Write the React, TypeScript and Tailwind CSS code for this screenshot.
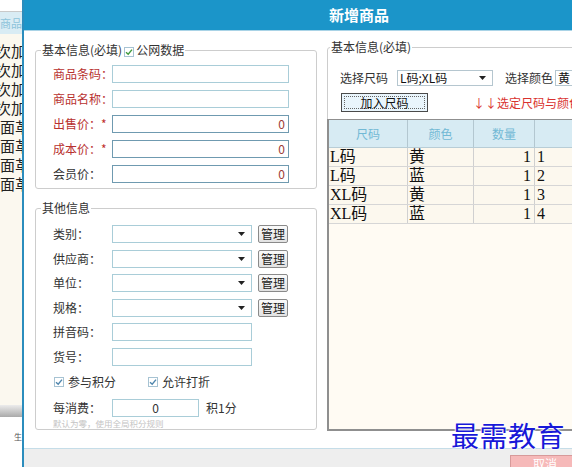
import React from 'react';

function Tick({ color = '#4f86ad' }: { color?: string }) {
  return (
    <span className="inline-flex w-[10px] h-[10px] border border-[#a7c3d3] bg-white items-center justify-center shrink-0">
      <svg width="8" height="8" viewBox="0 0 8 8">
        <path d="M1 4.2 L3.2 6.3 L7 1.6" fill="none" stroke={color} strokeWidth="1.4" />
      </svg>
    </span>
  );
}

function Caret() {
  return (
    <svg width="7" height="4" viewBox="0 0 7 4" className="shrink-0">
      <path d="M0 0H7L3.5 4Z" fill="#222" />
    </svg>
  );
}

function Box({ className = '', value = '', align = 'text-right' }: { className?: string; value?: string; align?: string }) {
  return (
    <div className={`h-[18px] bg-white flex items-center px-[3px] text-[#9b3b35] ${align} ${className}`}>
      <span className="w-full">{value}</span>
    </div>
  );
}

function Field({ label, red, star, children }: { label: string; red?: boolean; star?: boolean; children: React.ReactNode }) {
  return (
    <div className="flex items-center h-[18px]">
      <div className={`w-[59px] shrink-0 whitespace-nowrap ${red ? 'text-[#b8312f]' : 'text-[#333]'}`}>
        {label}
        {star && <span className="text-[#c0302c]">*</span>}
      </div>
      {children}
    </div>
  );
}

function Dropdown({ className = '', value = '' }: { className?: string; value?: string }) {
  return (
    <div className={`h-[18px] border border-[#a9cdd8] bg-white flex items-center justify-between pl-[3px] pr-[6px] ${className}`}>
      <span>{value}</span>
      <Caret />
    </div>
  );
}

function ManageBtn() {
  return (
    <div className="ml-[6px] w-[30px] h-[18px] border border-[#8a8a8a] rounded-[2px] bg-gradient-to-b from-[#fafafa] to-[#e2e2e2] flex items-center justify-center text-[12px] text-[#222]">
      管理
    </div>
  );
}

const sideRows = ['次加', '次加', '次加', '次加', '面革', '面革', '面革', '面革'];

const sizeRows = [
  { size: 'L码', color: '黄', qty: 1, n: 1 },
  { size: 'L码', color: '蓝', qty: 1, n: 2 },
  { size: 'XL码', color: '黄', qty: 1, n: 3 },
  { size: 'XL码', color: '蓝', qty: 1, n: 4 },
];

export default function App() {
  return (
    <div className="relative w-[572px] h-[467px] overflow-hidden flex bg-white text-[12px] text-[#333] font-['Noto_Sans_CJK_SC',sans-serif]">
      {/* page behind the dialog */}
      <div className="w-[22px] shrink-0 flex flex-col bg-[#fbf8ef] overflow-hidden">
        <div className="h-[12px] bg-white border-b border-[#c9c9c9] shrink-0" />
        <div className="h-[22px] bg-[#d9ecf4] text-[11px] text-[#8cc3da] leading-[22px] whitespace-nowrap shrink-0">商品</div>
        <div className="mt-[7px] flex flex-col">
          {sideRows.map((t, i) => (
            <div key={i} className={`h-[19px] leading-[19px] text-[15px] text-[#222] whitespace-nowrap ${t === '次加' ? '-ml-[4px]' : ''}`}>
              {t}
            </div>
          ))}
        </div>
        <div className="flex-1" />
        <div className="h-[12px] bg-gradient-to-b from-[#ececec] to-[#aaaaaa] shrink-0" />
        <div className="h-[50px] bg-white shrink-0 flex items-start justify-end pt-[14px] text-[8px] text-[#555]">生</div>
      </div>

      {/* dialog */}
      <div className="w-[672px] shrink-0 flex flex-col border-l-2 border-[#2b8dbd]">
        <div className="h-[30px] bg-[#1b95c9] flex items-center justify-center text-[15px] font-bold text-white shrink-0">
          新增商品
        </div>
        <div className="h-px bg-[#a9d3e6] shrink-0" />

        <div className="flex-1 flex gap-[10px] pl-[11px] pb-[17px]">
          {/* left column */}
          <div className="w-[282px] shrink-0 flex flex-col">
            <fieldset className="mt-[11px] border border-[#cdcdcd] rounded-[3px] pl-[17px] pr-[27px] pt-[6px] pb-[5px]">
              <legend className="-ml-[12px] px-px leading-[16px] text-[#333] whitespace-nowrap">
                基本信息(必填)
                <span className="inline-block align-[-1px] mx-[2px]"><Tick color="#3f9a3c" /></span>
                公网数据
              </legend>
              <div className="flex flex-col gap-[7px]">
                <Field label="商品条码：" red>
                  <Box className="w-[177px] border border-[#a9cdd8]" />
                </Field>
                <Field label="商品名称：" red>
                  <Box className="w-[177px] border border-[#a9cdd8]" />
                </Field>
                <Field label="出售价：" red star>
                  <Box className="w-[177px] border border-[#6f9ab0]" value="0" />
                </Field>
                <Field label="成本价：" red star>
                  <Box className="w-[177px] border border-[#6f9ab0]" value="0" />
                </Field>
                <Field label="会员价：">
                  <Box className="w-[177px] border border-[#6f9ab0]" value="0" />
                </Field>
              </div>
            </fieldset>

            <fieldset className="mt-[11px] border border-[#cdcdcd] rounded-[3px] pl-[17px] pr-[27px] pt-[9px] pb-[1px]">
              <legend className="-ml-[12px] px-px leading-[16px] text-[#333]">其他信息</legend>
              <div className="flex flex-col gap-[6.5px]">
                {['类别：', '供应商：', '单位：', '规格：'].map(l => (
                  <Field key={l} label={l}>
                    <Dropdown className="w-[140px]" />
                    <ManageBtn />
                  </Field>
                ))}
                <Field label="拼音码：">
                  <Box className="w-[140px] border border-[#a9cdd8]" />
                </Field>
                <Field label="货号：">
                  <Box className="w-[140px] border border-[#a9cdd8]" />
                </Field>
              </div>
              <div className="mt-[7.5px] h-[18px] flex items-center">
                <div className="w-[95px] flex items-center gap-[4px] pl-px">
                  <Tick />
                  <span>参与积分</span>
                </div>
                <div className="flex items-center gap-[4px]">
                  <Tick />
                  <span>允许打折</span>
                </div>
              </div>
              <div className="mt-[8px]">
                <Field label="每消费：">
                  <Box className="w-[87px] border border-[#a9cdd8] text-[#333]" value="0" align="text-center" />
                  <span className="ml-[7px]">积1分</span>
                </Field>
              </div>
              <div className="mt-px h-[10px] leading-[10px] text-[8.5px] text-[#c4c4c4] whitespace-nowrap">
                默认为零，使用全局积分规则
              </div>
            </fieldset>
          </div>

          {/* right column */}
          <fieldset className="mt-[8px] w-[330px] shrink-0 border border-[#cdcdcd] rounded-[3px] flex flex-col">
            <legend className="ml-[2px] px-px leading-[16px] text-[#333]">基本信息(必填)</legend>
            <div className="pl-[12px] pt-[15px]">
              <div className="h-[16px] flex items-center whitespace-nowrap">
                <span className="w-[57px] shrink-0">选择尺码</span>
                <div className="w-[96px] h-[16px] border border-[#b5c6cf] bg-white flex items-center justify-between pl-[2px] pr-[6px]">
                  <span className="text-[#111]">L码;XL码</span>
                  <Caret />
                </div>
                <span className="ml-[12px] w-[50px] shrink-0">选择颜色</span>
                <div className="w-[60px] h-[16px] border border-[#b5c6cf] bg-white flex items-center pl-[2px]">
                  <span className="text-[#111]">黄</span>
                </div>
              </div>
              <div className="mt-[7px] h-[19px] flex items-center whitespace-nowrap">
                <div className="ml-px w-[87px] h-[19px] border border-[#4a4a4a] bg-[#e9f5fc] p-[2px]">
                  <div className="h-full border border-dotted border-[#666] flex items-center justify-center text-[#111]">
                    加入尺码
                  </div>
                </div>
                <span className="ml-[45px] text-[#d9322e]">↓↓选定尺码与颜色后点击加入尺码</span>
              </div>
            </div>

            <div className="mt-[7px] -ml-px -mb-px flex-1 flex flex-col border-l-2 border-t border-b-2 border-[#8f8f8f] bg-[#fffbf3]">
              <div className="h-[28px] flex bg-[#d7ebf3] text-[#72b9d5] shrink-0 border-b border-[#b8cdd6]">
                <div className="w-[79px] border-r border-[#b3c7d0] flex items-center justify-center">尺码</div>
                <div className="w-[66px] border-r border-[#b3c7d0] flex items-center justify-center">颜色</div>
                <div className="w-[61px] border-r border-[#b3c7d0] flex items-center justify-center">数量</div>
                <div className="flex-1" />
              </div>
              {sizeRows.map((r, i) => (
                <div key={i} className="h-[19px] flex text-[16px] leading-[18px] text-[#111] bg-[#fcf8ee] border-b border-[#d6d6d6] font-['Liberation_Serif','Noto_Sans_CJK_SC',serif]">
                  <div className="w-[79px] border-r border-[#d0d0d0] pl-px">{r.size}</div>
                  <div className="w-[66px] border-r border-[#d0d0d0] pl-px">{r.color}</div>
                  <div className="w-[61px] border-r border-[#d0d0d0] pr-[3px] text-right">{r.qty}</div>
                  <div className="flex-1 pl-[2px]">{r.n}</div>
                </div>
              ))}
            </div>
          </fieldset>
        </div>

        <div className="h-[19px] shrink-0 border-t border-[#c5dde8] bg-[#eeeeee] pl-[486px] pt-[6px]">
          <div className="w-[70px] h-[18px] border border-[#d79a9a] bg-[#f6b9b9] text-white text-center leading-[16px]">取消</div>
        </div>
      </div>

      {/* watermark */}
      <div className="absolute left-[451px] top-[421px] text-[28px] leading-none tracking-[0.5px] text-[#1818d8] whitespace-nowrap [text-shadow:0_0_2px_#fff,0_0_2px_#fff,0_0_2px_#fff]">
        最需教育
      </div>
    </div>
  );
}
